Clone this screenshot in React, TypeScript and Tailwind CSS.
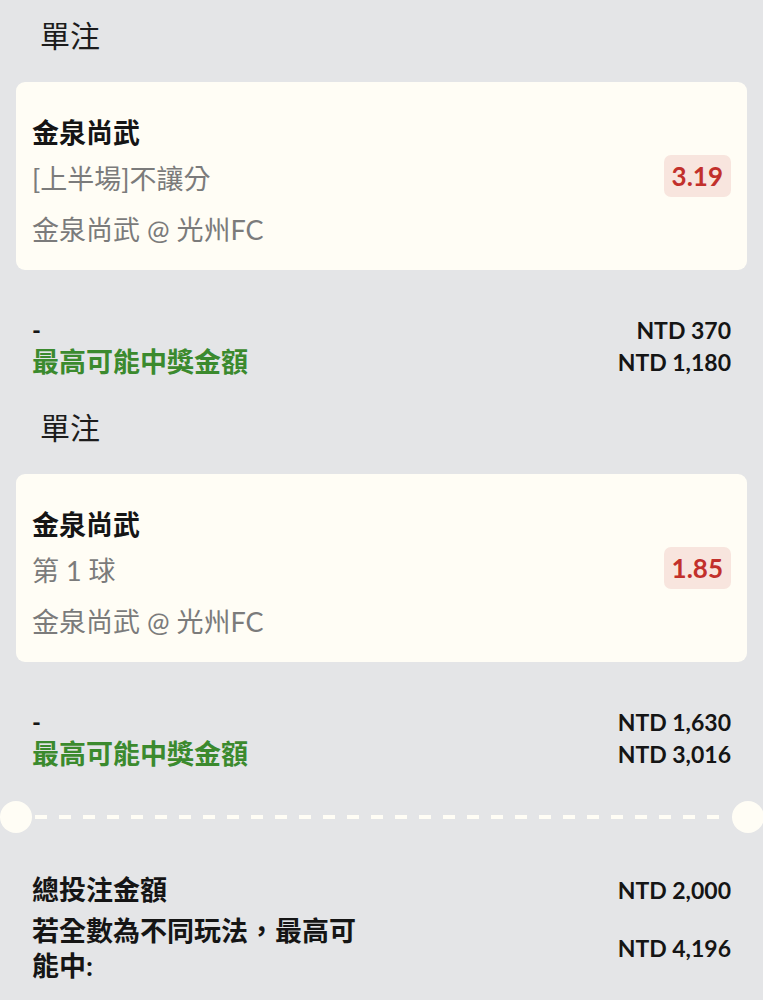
import React from "react";

const FONT = { fontFamily: 'Lato, "Noto Sans CJK TC", "Noto Sans", sans-serif' };

function Section({ bet, odds, stake, win }: { bet: string; odds: string; stake: string; win: string }) {
  return (
    <div className="flex flex-col">
      <div className="pl-[40px] text-[30px] leading-[40px] text-[#1c1c1c]">單注</div>
      <div className="mx-[16px] mt-[27px] flex h-[188px] items-center justify-between rounded-[9px] bg-[#fffdf5] pl-[16px] pr-[16px]">
        <div className="flex flex-col self-start pt-[33px]">
          <div className="text-[27px] font-bold leading-[36px] text-[#151515]">金泉尚武</div>
          <div className="mt-[10px] text-[27px] leading-[36px] text-[#7b7b7b]">{bet}</div>
          <div className="mt-[15px] text-[27px] leading-[36px] text-[#7b7b7b]">金泉尚武 @ 光州FC</div>
        </div>
        <div className="flex h-[42px] items-center rounded-[7px] bg-[#f8e5de] px-[8px] text-[26px] font-bold text-[#c2302b]">
          {odds}
        </div>
      </div>
      <div className="mt-[44px] flex flex-col px-[32px]">
        <div className="flex h-[32px] items-center justify-between">
          <span className="text-[24px] font-bold text-[#151515]">-</span>
          <span className="text-[23px] font-bold text-[#151515]">{stake}</span>
        </div>
        <div className="flex h-[32px] items-center justify-between">
          <span className="text-[27px] font-bold text-[#3b8a2e]">最高可能中獎金額</span>
          <span className="text-[23px] font-bold text-[#151515]">{win}</span>
        </div>
      </div>
    </div>
  );
}

export default function App() {
  return (
    <div className="h-[1000px] w-[763px] overflow-hidden bg-[#e4e5e7]" style={FONT}>
      <div className="flex flex-col pt-[15px]">
        <Section bet="[上半場]不讓分" odds="3.19" stake="NTD 370" win="NTD 1,180" />
        <div className="mt-[29px]">
          <Section bet="第 1 球" odds="1.85" stake="NTD 1,630" win="NTD 3,016" />
        </div>
        <div className="mt-[31px] flex h-[32px] items-center">
          <div className="h-[32px] w-[32px] shrink-0 rounded-full bg-[#fffdf5]" />
          <div className="mx-[3px] h-[4px] flex-1 bg-[repeating-linear-gradient(to_right,#fffdf5_0_12px,transparent_12px_24px)]" />
          <div className="mr-[-1px] h-[32px] w-[32px] shrink-0 rounded-full bg-[#fffdf5]" />
        </div>
        <div className="mt-[39px] flex flex-col px-[32px]">
          <div className="flex h-[36px] items-center justify-between">
            <span className="text-[27px] font-bold text-[#151515]">總投注金額</span>
            <span className="text-[23px] font-bold text-[#151515]">NTD 2,000</span>
          </div>
          <div className="mt-[5px] flex items-center justify-between">
            <span className="max-w-[340px] text-[27px] font-bold leading-[35px] text-[#151515]">
              若全數為不同玩法，最高可能中:
            </span>
            <span className="text-[23px] font-bold text-[#151515]">NTD 4,196</span>
          </div>
        </div>
      </div>
    </div>
  );
}
